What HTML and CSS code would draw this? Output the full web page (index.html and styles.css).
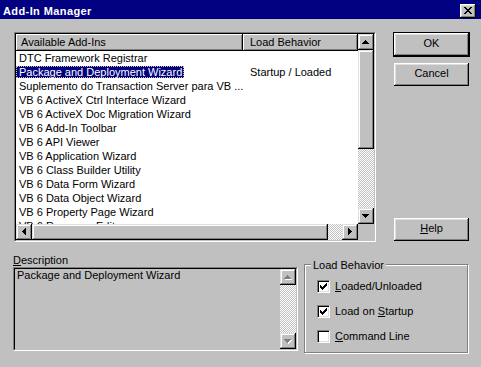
FILE: index.html
```html
<!DOCTYPE html>
<html>
<head>
<meta charset="utf-8">
<link rel="stylesheet" href="styles.css">
</head>
<body>
<div class="window">
  <div class="titlebar">
    <span class="title">Add-In Manager</span>
    <div class="close">
      <svg width="8" height="7" viewBox="0 0 8 7" shape-rendering="crispEdges"><path d="M0 0h2v1h-2zM6 0h2v1h-2zM1 1h2v1h-2zM5 1h2v1h-2zM2 2h4v1h-4zM3 3h2v1h-2zM2 4h4v1h-4zM1 5h2v1h-2zM5 5h2v1h-2zM0 6h2v1h-2zM6 6h2v1h-2z" fill="#000"/></svg>
    </div>
  </div>
  <div class="main">
    <div class="top">
      <div class="listbox">
        <div class="listbox-in">
          <div class="list-content">
            <div class="header">
              <div class="hcell h1">Available Add-Ins</div>
              <div class="hcell h2">Load Behavior</div>
            </div>
            <div class="row"><div class="c1"><span>DTC Framework Registrar</span></div><div class="c2"></div></div>
            <div class="row"><div class="c1"><span class="sel">Package and Deployment Wizard</span></div><div class="c2">Startup / Loaded</div></div>
            <div class="row"><div class="c1"><span>Suplemento do Transaction Server para VB ...</span></div><div class="c2"></div></div>
            <div class="row"><div class="c1"><span>VB 6 ActiveX Ctrl Interface Wizard</span></div><div class="c2"></div></div>
            <div class="row"><div class="c1"><span>VB 6 ActiveX Doc Migration Wizard</span></div><div class="c2"></div></div>
            <div class="row"><div class="c1"><span>VB 6 Add-In Toolbar</span></div><div class="c2"></div></div>
            <div class="row"><div class="c1"><span>VB 6 API Viewer</span></div><div class="c2"></div></div>
            <div class="row"><div class="c1"><span>VB 6 Application Wizard</span></div><div class="c2"></div></div>
            <div class="row"><div class="c1"><span>VB 6 Class Builder Utility</span></div><div class="c2"></div></div>
            <div class="row"><div class="c1"><span>VB 6 Data Form Wizard</span></div><div class="c2"></div></div>
            <div class="row"><div class="c1"><span>VB 6 Data Object Wizard</span></div><div class="c2"></div></div>
            <div class="row"><div class="c1"><span>VB 6 Property Page Wizard</span></div><div class="c2"></div></div>
            <div class="row"><div class="c1"><span>VB 6 Resource Editor</span></div><div class="c2"></div></div>
          </div>
          <div class="vscroll">
            <div class="sbtn"><svg width="16" height="16" viewBox="0 0 16 16" shape-rendering="crispEdges"><path d="M7 6h1v1h-1zM6 7h3v1h-3zM5 8h5v1h-5zM4 9h7v1h-7z" fill="#000"/></svg></div>
            <div class="thumb vthumb"></div>
            <div class="track"></div>
            <div class="sbtn"><svg width="16" height="16" viewBox="0 0 16 16" shape-rendering="crispEdges"><path d="M4 6h7v1h-7zM5 7h5v1h-5zM6 8h3v1h-3zM7 9h1v1h-1z" fill="#000"/></svg></div>
          </div>
          <div class="hscroll">
            <div class="sbtn"><svg width="16" height="16" viewBox="0 0 16 16" shape-rendering="crispEdges"><path d="M6 7h1v1h-1zM7 6h1v3h-1zM8 5h1v5h-1zM9 4h1v7h-1z" fill="#000"/></svg></div>
            <div class="thumb hthumb"></div>
            <div class="track"></div>
            <div class="sbtn"><svg width="16" height="16" viewBox="0 0 16 16" shape-rendering="crispEdges"><path d="M6 4h1v7h-1zM7 5h1v5h-1zM8 6h1v3h-1zM9 7h1v1h-1z" fill="#000"/></svg></div>
          </div>
          <div class="corner"></div>
        </div>
      </div>
      <div class="buttons">
        <div class="btn default">OK</div>
        <div class="btn">Cancel</div>
        <div class="btn help"><u>H</u>elp</div>
      </div>
    </div>
    <div class="bottom">
      <div class="desc">
        <div class="label"><u>D</u>escription</div>
        <div class="descbox">
          <div class="descbox-in">
            <div class="desc-text">Package and Deployment Wizard</div>
            <div class="vscroll">
              <div class="sbtn"><svg width="16" height="16" viewBox="0 0 16 16" shape-rendering="crispEdges"><path d="M8 7h1v1h-1zM7 8h3v1h-3zM6 9h5v1h-5zM5 10h7v1h-7z" fill="#fff"/><path d="M7 6h1v1h-1zM6 7h3v1h-3zM5 8h5v1h-5zM4 9h7v1h-7z" fill="#808080"/></svg></div>
              <div class="track"></div>
              <div class="sbtn"><svg width="16" height="16" viewBox="0 0 16 16" shape-rendering="crispEdges"><path d="M5 7h7v1h-7zM6 8h5v1h-5zM7 9h3v1h-3zM8 10h1v1h-1z" fill="#fff"/><path d="M4 6h7v1h-7zM5 7h5v1h-5zM6 8h3v1h-3zM7 9h1v1h-1z" fill="#808080"/></svg></div>
            </div>
          </div>
        </div>
      </div>
      <div class="frame">
        <div class="legend">Load Behavior</div>
        <div class="check">
          <div class="box"><svg width="7" height="7" viewBox="0 0 7 7" shape-rendering="crispEdges"><path d="M6 0h1v3h-1zM5 1h1v3h-1zM4 2h1v3h-1zM3 3h1v3h-1zM2 4h1v3h-1zM1 3h1v3h-1zM0 2h1v3h-1z" fill="#000"/></svg></div>
          <span><u>L</u>oaded/Unloaded</span>
        </div>
        <div class="check">
          <div class="box"><svg width="7" height="7" viewBox="0 0 7 7" shape-rendering="crispEdges"><path d="M6 0h1v3h-1zM5 1h1v3h-1zM4 2h1v3h-1zM3 3h1v3h-1zM2 4h1v3h-1zM1 3h1v3h-1zM0 2h1v3h-1z" fill="#000"/></svg></div>
          <span>Load on <u>S</u>tartup</span>
        </div>
        <div class="check">
          <div class="box"></div>
          <span><u>C</u>ommand Line</span>
        </div>
      </div>
    </div>
  </div>
</div>
</body>
</html>
```
FILE: styles.css
```css
* { box-sizing: border-box; }
html, body { margin: 0; padding: 0; }
body {
  width: 481px;
  height: 367px;
  overflow: hidden;
  background: #c0c0c0;
  color: #000;
  font-family: "Liberation Sans", Arial, sans-serif;
  font-size: 11px;
  line-height: 13px;
}
.window {
  width: 481px;
  height: 367px;
  display: flex;
  flex-direction: column;
  background: #c0c0c0;
}
.titlebar {
  height: 19px;
  background: #000080;
  color: #fff;
  display: flex;
  align-items: flex-start;
  padding: 5px 5px 0 3px;
}
.title {
  flex: 1;
  font-weight: bold;
  letter-spacing: 0.4px;
  line-height: 13px;
}
.close {
  width: 16px;
  height: 14px;
  margin-top: -1px;
  background: #c0c0c0;
  box-shadow: inset -1px -1px #000, inset 1px 1px #fff, inset -2px -2px #808080, inset 2px 2px #dfdfdf;
  display: flex;
  align-items: center;
  justify-content: center;
  padding-bottom: 1px;
}
.close svg { display: block; }
.main {
  display: flex;
  flex-direction: column;
  padding: 13px 0 0 14px;
}
.top { display: flex; }
.listbox {
  width: 362px;
  height: 210px;
  border: 1px solid;
  border-color: #808080 #fff #fff #808080;
}
.listbox-in {
  width: 100%;
  height: 100%;
  border: 1px solid;
  border-color: #000 #c0c0c0 #c0c0c0 #000;
  background: #fff;
  display: grid;
  grid-template-columns: 342px 16px;
  grid-template-rows: 190px 16px;
}
.list-content {
  overflow: hidden;
  white-space: nowrap;
}
.header { display: flex; height: 17px; }
.hcell {
  height: 17px;
  padding: 2px 0 0 5px;
  background: #c0c0c0;
  box-shadow: inset -1px -1px #000, inset 1px 1px #fff, inset -2px -2px #808080;
  overflow: hidden;
}
.h1 { width: 227px; }
.h2 { width: 115px; padding-left: 7px; }
.row { display: flex; height: 14px; line-height: 14px; }
.c1 { width: 227px; overflow: hidden; }
.c1 span { padding-left: 3px; }
.c2 { padding-left: 7px; }
.c1 .sel {
  display: inline-block;
  line-height: 12px;
  margin-top: 1px;
  padding: 0 2px 0 3px;
  background: #000080;
  color: #fff;
  outline: 1px dotted #c8c890;
  outline-offset: -1px;
}
.vscroll { display: flex; flex-direction: column; }
.hscroll { display: flex; }
.sbtn, .thumb {
  width: 16px;
  height: 16px;
  flex: none;
  background: #c0c0c0;
  box-shadow: inset -1px -1px #000, inset 1px 1px #dfdfdf, inset -2px -2px #808080, inset 2px 2px #fff;
}
.sbtn svg { display: block; }
.vthumb { height: 99px; }
.hthumb { width: 296px; }
.track {
  flex: 1;
  background-color: #c0c0c0;
  background-image: repeating-conic-gradient(#fff 0 25%, #c0c0c0 0 50%);
  background-size: 2px 2px;
}
.corner { background: #c0c0c0; }
.buttons {
  display: flex;
  flex-direction: column;
  margin-left: 18px;
  padding-top: 1px;
}
.btn {
  width: 75px;
  height: 23px;
  line-height: 21px;
  text-align: center;
  background: #c0c0c0;
  box-shadow: inset -1px -1px #000, inset 1px 1px #fff, inset -2px -2px #808080, inset 2px 2px #dfdfdf;
}
.btn.default { outline: 1px solid #000; margin-bottom: 7px; }
.btn.help { margin-top: 132px; }
.bottom {
  display: flex;
  align-items: flex-start;
  margin-top: 12px;
}
.desc { margin-left: -1px; }
.label { height: 13px; }
.descbox {
  width: 285px;
  height: 84px;
  border: 1px solid;
  border-color: #808080 #fff #fff #808080;
}
.descbox-in {
  width: 100%;
  height: 100%;
  border: 1px solid;
  border-color: #000 #c0c0c0 #c0c0c0 #000;
  display: flex;
}
.desc-text { flex: 1; padding-left: 2px; }
.frame {
  position: relative;
  width: 164px;
  height: 89px;
  margin: 10px 0 0 6px;
  border: 1px solid #808080;
  box-shadow: 1px 1px 0 #fff, inset 1px 1px 0 #fff;
  padding: 15px 0 0 12px;
}
.legend {
  position: absolute;
  top: -6px;
  left: 6px;
  padding: 0 2px;
  background: #c0c0c0;
}
.check {
  display: flex;
  align-items: center;
  gap: 5px;
  height: 13px;
  margin-bottom: 12px;
}
.box {
  width: 13px;
  height: 13px;
  background: #fff;
  border: 1px solid;
  border-color: #808080 #fff #fff #808080;
  box-shadow: inset 1px 1px #000, inset -1px -1px #dfdfdf;
  display: flex;
  align-items: center;
  justify-content: center;
}
.box svg { display: block; }
```
